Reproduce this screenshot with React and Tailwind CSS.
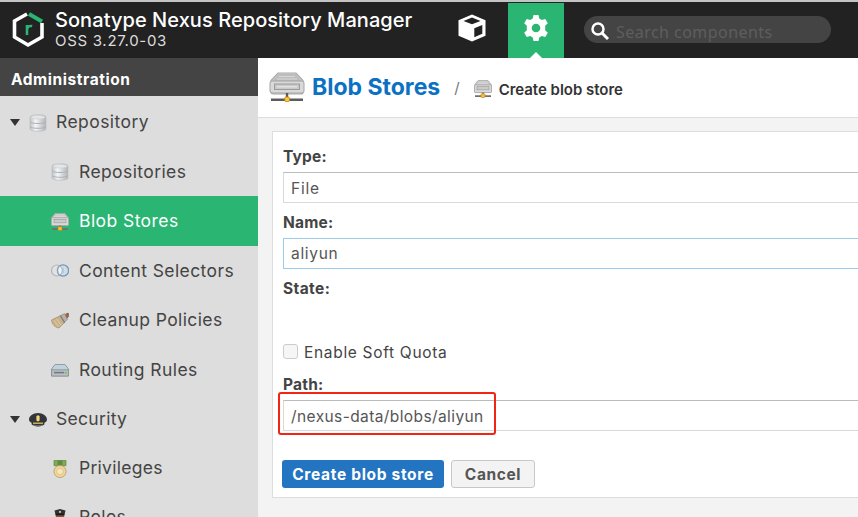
import React from 'react';

function Drive({ className }) {
  return (
    <svg viewBox="0 0 36 30" preserveAspectRatio="none" className={className}>
      <path d="M9 1h18l7 7.500v11.500a2 2 0 0 1-2 2H4a2 2 0 0 1-2-2V8.500z" fill="#d2d2d2" stroke="#aaa" strokeWidth="1.2" />
      <path d="M9.500 2h17l6 7h-29z" fill="#bdbdbd" />
      <path d="M10 4.500h16M8 7h20" stroke="#d8d8d8" strokeWidth="1" />
      <rect x="1" y="9" width="34" height="12" rx="2" fill="#d9d9d9" stroke="#a3a3a3" />
      <rect x="5.500" y="12" width="25" height="5.500" fill="#c9c9c9" stroke="#9b9b9b" />
      <path d="M8 14.800h20" stroke="#ededed" />
      <path d="M18 21v5M2 27.800h32" stroke="#5c5c5c" strokeWidth="2.4" />
      <rect x="15.800" y="25" width="4.600" height="4.600" rx="1" fill="#ffc83a" stroke="#c78312" strokeWidth=".8" />
    </svg>
  );
}

function SmallDrive() {
  return (
    <svg viewBox="0 0 18 18" className="size-[18px]">
      <path d="M4 .500h10l3.200 4v7.800H.800V4.500z" fill="#c4c4c4" stroke="#ababab" strokeWidth=".8" />
      <path d="M4.500 2h9M3.500 3.600h11" stroke="#dedede" strokeWidth=".8" />
      <rect x=".500" y="4.800" width="17" height="7.800" rx="1.200" fill="#dadada" stroke="#a4a4a4" strokeWidth=".8" />
      <rect x="3" y="6.600" width="12" height="3.200" fill="#cacaca" stroke="#a0a0a0" strokeWidth=".7" />
      <path d="M9 12.600v3M1 16.200h16" stroke="#707070" strokeWidth="1.700" />
      <rect x="7" y="13.700" width="4" height="3.800" rx=".8" fill="#f7bd35" stroke="#bd8420" strokeWidth=".6" />
    </svg>
  );
}

function Database() {
  return (
    <svg viewBox="0 0 18 18" className="size-[18px]">
      <defs>
        <linearGradient id="cyl">
          <stop offset="0" stopColor="#bfc3c6" />
          <stop offset=".35" stopColor="#f3f5f6" />
          <stop offset="1" stopColor="#b0b4b7" />
        </linearGradient>
      </defs>
      <path d="M1 3c0-3 16-3 16 0v12c0 3-16 3-16 0z" fill="url(#cyl)" stroke="#b9bdc0" strokeWidth=".7" />
      <ellipse cx="9" cy="3.2" rx="7.2" ry="1.8" fill="#e4e7e9" stroke="#c3c7ca" strokeWidth=".5" />
      <path d="M1 7.800c1 2.300 15 2.300 16 0M1 12.600c1 2.300 15 2.300 16 0" fill="none" stroke="#aeb2b5" />
    </svg>
  );
}

function Rings() {
  return (
    <svg viewBox="0 0 18 18" className="size-[18px]">
      <circle cx="6" cy="7.500" r="5.500" fill="#e2e2e2" stroke="#b2b7bb" strokeWidth="1.2" />
      <circle cx="12" cy="7.500" r="5.600" fill="#cfdde8" stroke="#7796b3" strokeWidth="1.300" />
      <path d="M9 3a5.600 5.600 0 0 0 0 9 5.600 5.600 0 0 0 0-9z" fill="#eef4f8" stroke="#8fa5b8" strokeWidth=".8" />
      <path d="M12 4.700v5.600" stroke="#a5bccf" />
    </svg>
  );
}

function Brush() {
  return (
    <svg viewBox="0 0 18 18" className="size-[18px]">
      <path d="M12.500 4L16 .800l2 .4-.2 3.500-2.800 3z" fill="#92664a" />
      <path d="M9 3.800L13.600 1.600l2.800 6-4 3.400z" fill="#b9b1a9" stroke="#85807b" strokeWidth=".6" />
      <path d="M9.500 3.600l4 7L8 16C4.500 15.500 1 13 .500 8z" fill="#c9b18a" stroke="#9c8461" strokeWidth=".6" />
      <path d="M3 8.200l4.500 6.500M5.500 6.800l4.500 6.500" stroke="#e1cda7" strokeWidth=".9" />
      <path d="M9.500 3.800l4.200 7" stroke="#7c8086" strokeWidth="1.300" />
    </svg>
  );
}

function Router() {
  return (
    <svg viewBox="0 0 18 18" className="size-[18px]">
      <path d="M4 3.500h10l3.500 4.500v7H.500V8z" fill="#bfd2de" stroke="#8a979f" strokeWidth=".9" />
      <path d="M.600 8.800h16.800v6.200H.600z" fill="#b9bfc2" stroke="#858d91" strokeWidth=".8" />
      <path d="M3 11.600h10" stroke="#6f777b" strokeWidth="1.500" />
      <circle cx="14.600" cy="11.800" r="1" fill="#6fbf3e" />
    </svg>
  );
}

function Cap() {
  return (
    <svg viewBox="0 0 18 18" className="size-[18px]">
      <path d="M0 8.500C0 5 4 2 9 2s9 3 9 6.500c0 2-1.600 2.800-2.600 3.200v1.900c-3 2.400-9.800 2.400-12.800 0v-1.900C1.600 11.300 0 10.500 0 8.500z" fill="#34353a" />
      <path d="M4 12.200h10" stroke="#dfc257" strokeWidth="1.300" />
      <path d="M7.400 5L9 4.300l1.600.7v4.500L9 10.600 7.400 9.500z" fill="#f2d777" />
      <path d="M4 14c3 1.300 7 1.300 10 0" stroke="#82858b" fill="none" />
    </svg>
  );
}

function Medal() {
  return (
    <svg viewBox="0 0 18 18" className="size-[18px]">
      <path d="M3 .300h12v5.400H3z" fill="#82ab55" stroke="#5c8639" strokeWidth=".7" />
      <path d="M6.500.400h5v5h-5z" fill="#5f8b45" />
      <circle cx="9" cy="11.500" r="6" fill="#f0d9a0" stroke="#bd9d66" strokeWidth=".9" />
      <circle cx="9" cy="11.500" r="3.400" fill="#f9e6b8" stroke="#d9bd85" strokeWidth=".9" />
    </svg>
  );
}

function Officer() {
  return (
    <svg viewBox="0 0 18 18" className="size-[18px]">
      <path d="M3.500 1.500L9 0l5.500 1.500-1 4h-9z" fill="#2f3135" />
      <path d="M4.800 5h8.400v4c0 5-8.400 5-8.400 0z" fill="#80563f" />
      <path d="M4.500 4.700h9v1.600h-9z" fill="#17181a" />
      <circle cx="9" cy="2.900" r="1.100" fill="#d8c57a" />
      <path d="M2 18c0-7 14-7 14 0z" fill="#36404d" />
    </svg>
  );
}

const rows = [
  { label: 'Repository', icon: <Database />, parent: true, track: 'tracking-[0.43px]' },
  { label: 'Repositories', icon: <Database />, track: 'tracking-[0.40px]' },
  { label: 'Blob Stores', icon: <SmallDrive />, active: true, track: 'tracking-[0.43px]' },
  { label: 'Content Selectors', icon: <Rings />, track: 'tracking-[0.41px]' },
  { label: 'Cleanup Policies', icon: <Brush />, track: 'tracking-[0.39px]' },
  { label: 'Routing Rules', icon: <Router />, track: 'tracking-[0.43px]' },
  { label: 'Security', icon: <Cap />, parent: true, track: 'tracking-[0.3px]' },
  { label: 'Privileges', icon: <Medal />, track: 'tracking-[0.28px]' },
  { label: 'Roles', icon: <Officer />, track: 'tracking-[0.4px]' },
];

function NavRow({ row }) {
  return (
    <div className={`flex shrink-0 items-center ${row.parent ? 'pl-[10px]' : 'pl-[51px]'} ${row.active ? 'h-[50px] bg-[#2ab573] text-white' : 'h-[49.3px] text-[#444]'}`}>
      {row.parent && (
        <svg viewBox="0 0 10 7" className="mr-[9px] mt-0.5 h-[7px] w-[10px]"><path d="M0 0h10L5 7z" fill="#333" /></svg>
      )}
      <span className="mt-[3px] shrink-0">{row.icon}</span>
      <span className={`mt-[1.5px] whitespace-nowrap text-[17.5px] leading-6 ${row.parent ? 'ml-[9px]' : 'ml-[10px]'} ${row.track}`}>{row.label}</span>
    </div>
  );
}

function Header() {
  return (
    <header className="flex h-[58px] shrink-0 border-t-2 border-[#c4c4c4] bg-[#222]">
      <svg viewBox="0 0 34 38" className="ml-[11px] mt-[8px] h-[38px] w-[34px] shrink-0">
        <path d="M16 4L3.500 11v16L17 35l14-8V13" fill="none" stroke="#fff" strokeWidth="3.600" />
        <path d="M18 4l13 7.500" stroke="#2ab573" strokeWidth="4" />
        <path d="M16 25V15M16 19.500c.5-3 2.500-4 5.200-3.400" fill="none" stroke="#2ab573" strokeWidth="2.600" />
      </svg>
      <div className="ml-[10px] w-[388px] shrink-0 whitespace-nowrap pt-[6px]">
        <div className="text-[20px] font-medium leading-[25px] tracking-[0.06px] text-white"><span>Sonatype Nexus Repository Manager</span></div>
        <div className="text-[15px] leading-[16px] tracking-[0.7px] text-[#ddd]"><span>OSS 3.27.0-03</span></div>
      </div>
      <div className="flex w-[65px] shrink-0 items-start pl-[15px] pt-[12px]">
        <svg viewBox="0 0 28 28" className="size-7">
          <path d="M14 .500l13.500 5.700v15.600L14 27.500.500 21.800V6.200z" fill="#fff" />
          <path d="M5.500 7L14 3.500 22.500 7 14 10.300z" fill="#222" />
          <path d="M16.300 14.300l8-3.300v8.700l-8 3.500z" fill="#222" />
        </svg>
      </div>
      <div className="mt-px flex w-14 shrink-0 flex-col items-center justify-between bg-[#2ab573] pt-[12px]">
        <svg viewBox="0 0 26 26" className="size-[26px]">
          <path fillRule="evenodd" fill="#fff" d="M10.500 0h5l.8 3.500 2.500 1.400 3.500-1 2.500 4.300-2.600 2.500v4.600l2.600 2.500-2.500 4.300-3.500-1-2.500 1.400-.8 3.500h-5l-.8-3.500-2.500-1.400-3.500 1-2.500-4.300 2.600-2.500v-4.600L1.200 8.200l2.500-4.300 3.500 1 2.500-1.400zM13 8.700a4.300 4.300 0 1 0 0 8.600 4.300 4.300 0 0 0 0-8.600z" />
        </svg>
        <svg viewBox="0 0 12 6" className="h-[6px] w-[12px]"><path d="M6 0l6 6H0z" fill="#fff" /></svg>
      </div>
      <div className="ml-5 mt-[14px] flex h-[27px] w-[247px] items-center rounded-full bg-[#444] pl-[7px]">
        <svg viewBox="0 0 18 18" className="mt-0.5 size-[18px]"><circle cx="7" cy="7" r="5.500" fill="none" stroke="#fff" strokeWidth="2.500" /><path d="M11 11l6 6" stroke="#fff" strokeWidth="3" /></svg>
        <span className="ml-[7px] mt-[5px] whitespace-nowrap font-['Noto_Sans',sans-serif] text-[16px] leading-5 tracking-[0.46px] text-[#5e5e5e]">Search components</span>
      </div>
    </header>
  );
}

function Field({ label, value, focus, track }) {
  return (
    <>
      <div className="h-[22px] pt-px text-[15.500px] font-bold leading-[22px] tracking-[0.2px] text-[#444]"><span>{label}</span></div>
      <div className={`mt-[5px] flex h-[31px] items-center border border-r-0 bg-white pl-[7px] text-[15.500px] text-[#555] ${track} ${focus ? 'border-[#9bcaea] pt-px' : 'border-[#d9d9d9] border-t-[#bbb] pt-[3px]'}`}><span>{value}</span></div>
    </>
  );
}

export default function App() {
  return (
    <div className="relative flex h-[517px] w-[858px] flex-col overflow-hidden bg-[#f3f3f3] font-[Inter,sans-serif]">
      <Header />
      <div className="flex min-h-0 flex-1">
        <aside className="flex w-[258px] shrink-0 flex-col overflow-hidden bg-[#ddd]">
          <div className="mb-px flex h-[38px] shrink-0 items-center bg-[#444] pl-[11px] pt-[5px] text-[15.500px] font-bold tracking-[0.56px] text-white"><span>Administration</span></div>
          {rows.map((row) => <NavRow key={row.label} row={row} />)}
        </aside>
        <main className="flex min-w-0 flex-1 flex-col">
          <div className="flex h-[60px] shrink-0 items-center whitespace-nowrap border-b border-[#ddd] bg-white pl-[11px]">
            <Drive className="-mt-0.5 h-[30px] w-9" />
            <span className="-mt-px ml-[7px] text-[23px] font-bold leading-7 text-[#0c71c3]">Blob Stores</span>
            <span className="ml-[14px] mt-0.5 text-[15px] text-[#777]">/</span>
            <span className="ml-[14px] mt-0.5"><SmallDrive /></span>
            <span className="ml-[7px] mt-[5px] text-[15px] font-semibold tracking-[-0.03px] text-[#333]">Create blob store</span>
          </div>
          <section className="ml-[14px] mt-[13px] h-[367px] shrink-0 border border-r-0 border-[#ddd] bg-white pl-[10px] pt-[13px]">
            <Field label="Type:" value="File" track="tracking-[0.8px]" />
            <div className="h-[8px]" />
            <Field label="Name:" value="aliyun" focus track="tracking-[0.7px]" />
            <div className="mt-[9px] h-[22px] text-[15.500px] font-bold leading-[22px] tracking-[0.4px] text-[#444]"><span>State:</span></div>
            <div className="mt-[39px] flex h-[24px] items-center text-[15.500px] tracking-[0.68px] text-[#444]">
              <div className="mr-[6px] size-[15px] rounded-[3px] border border-[#ccc] bg-[#f6f6f6]" />
              <span className="mt-[3px]">Enable Soft Quota</span>
            </div>
            <div className="h-[10px]" />
            <Field label="Path:" value="/nexus-data/blobs/aliyun" track="tracking-[0.4px]" />
            <div className="-ml-px mt-[29px] flex whitespace-nowrap text-[15.500px] font-bold">
              <div className="flex h-7 w-[162px] items-center justify-center rounded-[3px] bg-[#2374c1] pt-0.5 tracking-[0.69px] text-white"><span>Create blob store</span></div>
              <div className="ml-[7px] flex h-7 w-[84px] items-center justify-center rounded-[3px] border border-[#c8c8c8] bg-[#f3f3f3] pt-0.5 tracking-[0.6px] text-[#555]"><span>Cancel</span></div>
            </div>
          </section>
        </main>
      </div>
      <div className="absolute left-[278px] top-[392px] h-[43px] w-[218px] rounded-[3px] border-2 border-[#f22413]" />
    </div>
  );
}
